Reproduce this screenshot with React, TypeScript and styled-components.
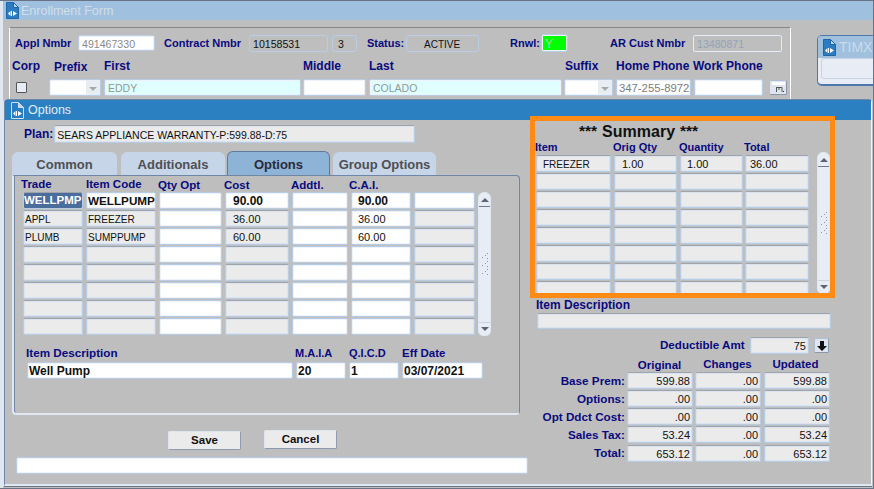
import React from "react";
import styled, { createGlobalStyle } from "styled-components";

const Global = createGlobalStyle`
  html, body { margin: 0; padding: 0; background: #bebebe; }
  body { font-family: "Liberation Sans", Arial, sans-serif; }
`;

const Desktop = styled.div`
  position: relative;
  width: 874px;
  height: 489px;
  overflow: hidden;
  background: #bebebe;
  box-sizing: border-box;
  border-top: 1px solid #6b7486;
  border-right: 1px solid #6b7486;
  border-bottom: 1px solid #6b7486;
`;

const Window = styled.section`
  position: absolute;
  box-sizing: border-box;
`;

const BackWindow = styled(Window)`
  inset: 0 0 0 0;
  border-left: 3px solid #dfe7f1;
`;

const TitleBar = styled.header<{ $active?: boolean }>`
  display: flex;
  align-items: center;
  gap: ${(p) => (p.$active ? 3 : 1)}px;
  height: ${(p) => (p.$active ? 20 : 19)}px;
  padding-left: ${(p) => (p.$active ? 5 : 2)}px;
  background: ${(p) => (p.$active ? "#2b80c2" : "#9fc0de")};
  color: ${(p) => (p.$active ? "#e4edf6" : "#d3dee9")};
  font-size: 12.5px;
  box-sizing: border-box;
`;

const HeaderPanel = styled.div`
  margin: 7px 0 0 6px;
  width: 782px;
  height: 80px;
  box-sizing: border-box;
  border-top: 1px solid #888;
  border-left: 1px solid #fff;
  border-right: 1px solid #fff;
  padding: 6px 0 0 5px;
`;

const FlexRow = styled.div<{ $gap?: number; $top?: number; $left?: number; $bottom?: number }>`
  display: flex;
  align-items: center;
  gap: ${(p) => p.$gap ?? 0}px;
  margin-top: ${(p) => p.$top ?? 0}px;
  margin-left: ${(p) => p.$left ?? 0}px;
  margin-bottom: ${(p) => p.$bottom ?? 0}px;
`;

const Label = styled.span<{ $w?: number; $ml?: number; $right?: boolean; $size?: number; $center?: boolean; $dy?: number }>`
  display: block;
  flex: none;
  font-size: ${(p) => p.$size ?? 12}px;
  line-height: 14px;
  font-weight: 700;
  color: #0a0a80;
  white-space: nowrap;
  ${(p) => (p.$w ? `width: ${p.$w}px;` : "")}
  margin-left: ${(p) => p.$ml ?? 0}px;
  text-align: ${(p) => (p.$right ? "right" : p.$center ? "center" : "left")};
  ${(p) => (p.$dy ? `transform: translateY(${p.$dy}px);` : "")}
`;

const Field = styled.div<{
  $w: number;
  $h?: number;
  $ml?: number;
  $mt?: number;
  $tone?: "white" | "gray" | "cyan" | "green" | "clear" | "halo";
  $bold?: boolean;
  $right?: boolean;
  $color?: string;
  $pad?: number;
  $size?: number;
  $lift?: boolean;
}>`
  flex: none;
  box-sizing: border-box;
  width: ${(p) => p.$w}px;
  height: ${(p) => p.$h ?? 17}px;
  margin-left: ${(p) => p.$ml ?? 0}px;
  margin-top: ${(p) => p.$mt ?? 0}px;
  padding: 0 ${(p) => (p.$right ? 2 : 0)}px 0 ${(p) => p.$pad ?? 3}px;
  border: 1px solid ${(p) => (p.$tone === "halo" ? "#e4ebf4" : "#b8cce4")};
  border-top-color: ${(p) => (p.$tone === "gray" ? "#9fa3aa" : p.$tone === "halo" ? "#e4ebf4" : "#b8cce4")};
  border-radius: 2px;
  box-shadow: inset 0 0 0 1px ${(p) =>
    p.$tone === "clear" || p.$tone === "halo"
      ? "transparent"
      : p.$tone === "gray"
      ? "#dbe3ee"
      : "#eef3f9"};
  background: ${(p) =>
    ({ white: "#fff", gray: "#ebebeb", cyan: "#e0ffff", green: "#00ff00", clear: "#bebebe", halo: "#bebebe" }[
      p.$tone ?? "white"
    ])};
  color: ${(p) => p.$color ?? "#111"};
  font-size: ${(p) => p.$size ?? (p.$bold ? 12 : 11)}px;
  font-weight: ${(p) => (p.$bold ? 700 : 400)};
  line-height: ${(p) => (p.$h ?? 17) - (p.$lift ? 2 : 0)}px;
  text-align: ${(p) => (p.$right ? "right" : "left")};
  white-space: nowrap;
  overflow: hidden;
`;

const SelectField = styled(Field)`
  position: relative;
  &::before {
    content: "";
    position: absolute;
    right: 0;
    top: 0;
    bottom: 0;
    width: 14px;
    background: #e8ecf3;
  }
  &::after {
    content: "";
    position: absolute;
    right: 3px;
    top: 7px;
    border: 4px solid transparent;
    border-top: 4px solid #a9a9a9;
    border-bottom: 0;
  }
`;

const Check = styled.span`
  flex: none;
  display: block;
  box-sizing: border-box;
  width: 11px;
  height: 11px;
  margin-left: 1px;
  background: #e8edf5;
  border: 1px solid #555;
  border-radius: 1px;
`;

const IconButton = styled.span<{ $ml: number; $w: number }>`
  flex: none;
  display: flex;
  align-items: center;
  justify-content: center;
  box-sizing: border-box;
  width: ${(p) => p.$w}px;
  height: 15px;
  margin-left: ${(p) => p.$ml}px;
  background: #dfe5ee;
  border: 1px solid #aebfd4;
  border-bottom-color: #8a97a8;
  border-right-color: #8a97a8;
  border-radius: 2px;
`;

const TimxWindow = styled(Window)`
  top: 34px;
  left: 817px;
  width: 70px;
  height: 51px;
  background: #e8edf5;
  border: 1px solid #4d78ac;
  border-bottom-width: 2px;
  border-radius: 5px;
  overflow: hidden;
`;

const TimxTitle = styled.div`
  display: flex;
  align-items: center;
  gap: 2px;
  font-size: 14px;
  color: #c8dcee;
  height: 22px;
  padding-left: 4px;
  background: #a0c0de;
  white-space: nowrap;
`;

const TimxBody = styled.div`
  height: 19px;
  margin: 0 0 0 3px;
  background: #e8edf5;
  border: 1px solid #c4d3e6;
  border-radius: 3px;
`;

const OptionsWindow = styled(Window)`
  top: 98px;
  left: 4px;
  width: 868px;
  height: 387px;
  background: #bebebe;
  border: 1px solid #6f86a6;
  border-right: 1px solid #f2f5f9;
  border-bottom: 2px solid #dfe7f1;
  border-radius: 4px 4px 0 0;
  box-shadow: 0 1px 0 #6b7486, -1px 0 0 #dfe7f1;
`;

const OptionsBody = styled.div`
  display: flex;
  height: 364px;
  box-sizing: border-box;
`;

const LeftColumn = styled.div`
  flex: none;
  width: 525px;
  padding: 5px 0 0 6px;
  box-sizing: border-box;
`;

const RightColumn = styled.div`
  flex: none;
  width: 340px;
  box-sizing: border-box;
`;

const Tabs = styled.nav`
  display: flex;
  margin: 8px 0 0 1px;
  height: 24px;
  align-items: flex-end;
`;

const Tab = styled.div<{ $w: number; $ml: number; $active?: boolean }>`
  box-sizing: border-box;
  width: ${(p) => p.$w}px;
  height: ${(p) => (p.$active ? 24 : 23)}px;
  margin-left: ${(p) => p.$ml}px;
  background: ${(p) => (p.$active ? "#8db3d6" : "#c6d5e8")};
  border-radius: 6px 6px 0 0;
  border: 1px solid ${(p) => (p.$active ? "#5d7a9c" : "#c6d5e8")};
  border-bottom: 0;
  color: ${(p) => (p.$active ? "#2a2a3a" : "#4f4f55")};
  font-size: 13px;
  font-weight: 700;
  line-height: ${(p) => (p.$active ? 26 : 24)}px;
  text-align: center;
  white-space: nowrap;
`;

const TabPanel = styled.div`
  width: 508px;
  height: 240px;
  margin-left: 1px;
  box-sizing: border-box;
  border: 1px solid #6f86a6;
  border-left: 2px solid #dfe7f1;
  border-bottom: 2px solid #dfe7f1;
  border-radius: 0 4px 4px 4px;
  box-shadow: inset 1px 0 0 #6f86a6;
  padding: 2px 0 0 9px;
`;

const GridWrap = styled.div`
  display: flex;
  gap: 3px;
`;

const GridRows = styled.div`
  display: flex;
  flex-direction: column;
  gap: 1px;
  flex: none;
`;

const GridRow = styled.div<{ $gap: number }>`
  display: flex;
  gap: ${(p) => p.$gap}px;
  height: 17px;
`;

const Scrollbar = styled.div<{ $h: number; $mt: number; $ml?: number }>`
  position: relative;
  flex: none;
  box-sizing: border-box;
  width: 13px;
  height: ${(p) => p.$h}px;
  margin-top: ${(p) => p.$mt}px;
  margin-left: ${(p) => p.$ml ?? 0}px;
  background: #e8edf5;
  border-radius: 6px 6px 5px 5px;
  border: 1px solid #dfe7f1;
`;

const ScrollUp = styled.span`
  position: absolute;
  left: 0;
  right: 0;
  top: 0;
  height: 13px;
  border-bottom: 1px solid #6f7c90;
  display: flex;
  align-items: center;
  justify-content: center;
  &::after {
    content: "";
    border: 4px solid transparent;
    border-bottom: 4px solid #5a6678;
    border-top: 0;
  }
`;

const ScrollDown = styled.span`
  position: absolute;
  left: 0;
  right: 0;
  bottom: 0;
  height: 12px;
  border-top: 1px solid #c9d3e0;
  display: flex;
  align-items: center;
  justify-content: center;
  &::after {
    content: "";
    border: 4px solid transparent;
    border-top: 4px solid #5a6678;
    border-bottom: 0;
  }
`;

const Grip = styled.svg`
  position: absolute;
  left: 2px;
  top: 50%;
  margin-top: -13px;
`;

const ButtonRow = styled.div`
  display: flex;
  align-items: flex-start;
  margin: 15px 0 0 157px;
`;

const Button = styled.div<{ $ml?: number; $mt?: number }>`
  box-sizing: border-box;
  width: 73px;
  height: 19px;
  margin-left: ${(p) => p.$ml ?? 0}px;
  margin-top: ${(p) => p.$mt ?? 0}px;
  background: #ebebeb;
  border: 1px solid #8c9bb0;
  border-top-color: #dfe5ee;
  border-left-color: #dfe5ee;
  border-radius: 2px;
  font-size: 11.5px;
  font-weight: 700;
  line-height: 17px;
  text-align: center;
  color: #111;
`;

const SummaryBox = styled.div`
  box-sizing: border-box;
  width: 305px;
  height: 182px;
  margin-top: -4px;
  border: 5px solid #ff8a14;
  overflow: hidden;
`;

const SummaryTitle = styled.div`
  display: flex;
  align-items: flex-start;
  gap: 5px;
  height: 17px;
  margin-left: 44px;
  margin-top: 2px;
  font-weight: 700;
  color: #111;
`;

const SummaryWord = styled.span`
  font-size: 16px;
  line-height: 18px;
`;

const Stars = styled.span`
  font-size: 15.500px;
  line-height: 15px;
  font-weight: 700;
`;

const SummaryWrap = styled.div`
  display: flex;
`;

const Totals = styled.div`
  display: grid;
  grid-template-columns: 95px 66px 66px 67px;
  column-gap: 2px;
  row-gap: 1px;
  align-items: center;
`;

const LogoSvg = styled.svg`
  flex: none;
`;

const Logo = ({ stroke = "#1f66a6" }: { stroke?: string }) => (
  <LogoSvg width="15" height="17" viewBox="0 0 15 17">
    <path d="M1.5 .5h7l5 5v11h-12z" fill="#2b7cc0" stroke={stroke} />
    <path d="M8.5 .5v5h5z" fill="#bcd4ea" stroke={stroke} />
    <path d="M3 11.5l2.500-2.500v5zM6 9h1v5H6zM8 9l4 2.500L8 14z" fill="#fff" />
  </LogoSvg>
);

const gridCols = [60, 70, 63, 64, 56, 60, 61];

type CellSpec = {
  text?: string;
  tone: "white" | "gray";
  bold?: boolean;
  pad?: number;
  size?: number;
  selected?: boolean;
  lift?: boolean;
};

const tradeRows: CellSpec[][] = [
  [
    { text: "WELLPMP", tone: "gray", bold: true, selected: true, pad: 0, lift: true },
    { text: "WELLPUMP", tone: "white", bold: true, pad: 1, size: 11.7, lift: true },
    { tone: "white" },
    { text: "90.00", tone: "white", bold: true, pad: 7 },
    { tone: "white" },
    { text: "90.00", tone: "white", bold: true, pad: 6 },
    { tone: "white" },
  ],
  [
    { text: "APPL", tone: "gray", size: 10, pad: 1 },
    { text: "FREEZER", tone: "gray", size: 10, pad: 1 },
    { tone: "white" },
    { text: "36.00", tone: "gray", pad: 7 },
    { tone: "white" },
    { text: "36.00", tone: "white", pad: 6 },
    { tone: "gray" },
  ],
  [
    { text: "PLUMB", tone: "gray", size: 10, pad: 1 },
    { text: "SUMPPUMP", tone: "gray", size: 10, pad: 1 },
    { tone: "white" },
    { text: "60.00", tone: "gray", pad: 7 },
    { tone: "white" },
    { text: "60.00", tone: "white", pad: 6 },
    { tone: "gray" },
  ],
  ...Array.from({ length: 5 }, (): CellSpec[] => [
    { tone: "gray" },
    { tone: "gray" },
    { tone: "white" },
    { tone: "gray" },
    { tone: "white" },
    { tone: "white" },
    { tone: "gray" },
  ]),
];

const Selected = styled.span`
  display: block;
  background: #4a6d9c;
  color: #fff;
  font-size: 11.5px;
  width: 58px;
  overflow: hidden;
`;

const summaryCols = [75, 63, 63, 64];
const summaryMargins = [1, 1, 1, 0];
const summaryPads = [6, 7, 6, 4];
const summaryFirst = ["FREEZER", "1.00", "1.00", "36.00"];

const totalsData: [string, string, string, string][] = [
  ["Base Prem:", "599.88", ".00", "599.88"],
  ["Options:", ".00", ".00", ".00"],
  ["Opt Ddct Cost:", ".00", ".00", ".00"],
  ["Sales Tax:", "53.24", ".00", "53.24"],
  ["Total:", "653.12", ".00", "653.12"],
];

const GripMarks = () => (
  <Grip width="8" height="26" viewBox="0 0 8 26">
    {[2, 10, 18].map((y) => (
      <g key={y} fill="#8a96a8">
        <rect x="6" y={y} width="1" height="1" />
        <rect x="4" y={y + 2} width="1" height="1" />
        <rect x="1" y={y + 4} width="1" height="1" />
        <rect x="6" y={y + 5} width="1" height="1" />
      </g>
    ))}
  </Grip>
);

export default function App() {
  return (
    <>
      <Global />
      <Desktop>
        <BackWindow>
          <TitleBar>
            <Logo />
            <span>Enrollment Form</span>
          </TitleBar>
          <HeaderPanel>
            <FlexRow>
              <Label $w={63} $size={11}>Appl Nmbr</Label>
              <Field $w={77} $h={16} $color="#8a8a8a" $size={10.6}>491467330</Field>
              <Label $w={85} $ml={9} $size={11}>Contract Nmbr</Label>
              <Field $w={79} $tone="clear" $size={10.6}>10158531</Field>
              <Field $w={25} $ml={4} $tone="clear" $pad={5} $size={10.6}>3</Field>
              <Label $w={39} $ml={10} $size={11}>Status:</Label>
              <Field $w={73} $tone="clear" $pad={17} $size={10}>ACTIVE</Field>
              <Label $w={31} $ml={31} $size={11}>Rnwl:</Label>
              <Field $w={27} $h={18} $tone="green" $color="#9fe8a0" $size={12}>Y</Field>
              <Label $w={83} $ml={42} $size={11}>AR Cust Nmbr</Label>
              <Field $w={89} $tone="halo" $color="#93a3b8" $size={10.6}>13480871</Field>
            </FlexRow>
            <FlexRow $top={7} $left={-3}>
              <Label $w={42}>Corp</Label>
              <Label $w={50} $dy={1}>Prefix</Label>
              <Label $w={199}>First</Label>
              <Label $w={66}>Middle</Label>
              <Label $w={196}>Last</Label>
              <Label $w={51}>Suffix</Label>
              <Label $w={77}>Home Phone</Label>
              <Label>Work Phone</Label>
            </FlexRow>
            <FlexRow $top={6}>
              <Check />
              <SelectField $w={52} $ml={22} />
              <Field $w={197} $ml={3} $tone="cyan" $color="#8f9a9a" $size={10.5}>EDDY</Field>
              <Field $w={63} $ml={2} />
              <Field $w={193} $ml={3} $tone="cyan" $color="#8f9a9a" $size={10.5}>COLADO</Field>
              <SelectField $w={49} $ml={2} />
              <Field $w={75} $ml={3} $color="#7d7d7d" $size={11.3} $pad={2}>347-255-8972</Field>
              <Field $w={69} $ml={3} />
              <IconButton $ml={6} $w={18}>
                <svg width="13" height="11" viewBox="0 0 13 11">
                  <rect x="0" y="0" width="13" height="3" fill="#fff" />
                  <path d="M4 5.500h6v4.500M4.500 5v5M7 5v3" fill="none" stroke="#555" />
                  <rect x="11" y="9" width="1" height="1" fill="#333" />
                </svg>
              </IconButton>
            </FlexRow>
          </HeaderPanel>
        </BackWindow>

        <TimxWindow>
          <TimxTitle>
            <Logo />
            <span>TIMX N</span>
          </TimxTitle>
          <TimxBody />
        </TimxWindow>

        <OptionsWindow>
          <TitleBar $active>
            <Logo stroke="#cfe0f0" />
            <span>Options</span>
          </TitleBar>
          <OptionsBody>
            <LeftColumn>
              <FlexRow>
                <Label $ml={13}>Plan:</Label>
                <Field $w={361} $ml={1} $h={18} $tone="gray" $pad={2} $size={10.5}>SEARS APPLIANCE WARRANTY-P:599.88-D:75</Field>
              </FlexRow>
              <Tabs>
                <Tab $w={105} $ml={0}>Common</Tab>
                <Tab $w={104} $ml={4}>Additionals</Tab>
                <Tab $w={103} $ml={2} $active>Options</Tab>
                <Tab $w={103} $ml={3}>Group Options</Tab>
              </Tabs>
              <TabPanel>
                <FlexRow $left={-2}>
                  <Label $w={65} $size={11.5} $dy={-1}>Trade</Label>
                  <Label $w={72} $size={11.5} $dy={-1}>Item Code</Label>
                  <Label $w={66} $size={11.5}>Qty Opt</Label>
                  <Label $w={67} $size={11.5}>Cost</Label>
                  <Label $w={58} $size={11.5}>Addtl.</Label>
                  <Label $size={11.5}>C.A.I.</Label>
                </FlexRow>
                <GridWrap>
                  <GridRows>
                    {tradeRows.map((row, r) => (
                      <GridRow key={r} $gap={3}>
                        {row.map((c, i) => (
                          <Field key={i} $w={gridCols[i]} $tone={c.tone} $bold={c.bold} $pad={c.pad} $size={c.size} $lift={c.lift}>
                            {c.selected ? <Selected>{c.text}</Selected> : c.text}
                          </Field>
                        ))}
                      </GridRow>
                    ))}
                  </GridRows>
                  <Scrollbar $h={144} $mt={0}>
                    <ScrollUp />
                    <GripMarks />
                    <ScrollDown />
                  </Scrollbar>
                </GridWrap>
                <FlexRow $top={10} $left={3}>
                  <Label $w={269} $size={11.7}>Item Description</Label>
                  <Label $w={54} $size={11}>M.A.I.A</Label>
                  <Label $w={53} $size={11}>Q.I.C.D</Label>
                  <Label $size={11.5}>Eff Date</Label>
                </FlexRow>
                <FlexRow $top={2} $left={4} $gap={3}>
                  <Field $w={266} $bold $pad={1}>Well Pump</Field>
                  <Field $w={50} $bold $pad={1}>20</Field>
                  <Field $w={50} $bold $pad={1}>1</Field>
                  <Field $w={81} $bold $pad={1}>03/07/2021</Field>
                </FlexRow>
              </TabPanel>
              <ButtonRow>
                <Button $mt={1}>Save</Button>
                <Button $ml={23}>Cancel</Button>
              </ButtonRow>
              <Field $w={512} $ml={5} $mt={7} />
            </LeftColumn>
            <RightColumn>
              <SummaryBox>
                <SummaryTitle>
                  <Stars>***</Stars>
                  <SummaryWord>Summary</SummaryWord>
                  <Stars>***</Stars>
                </SummaryTitle>
                <FlexRow $bottom={1}>
                  <Label $w={78} $size={11}>Item</Label>
                  <Label $w={66} $size={11}>Orig Qty</Label>
                  <Label $w={65} $size={11}>Quantity</Label>
                  <Label $size={11}>Total</Label>
                </FlexRow>
                <SummaryWrap>
                  <GridRows>
                    {Array.from({ length: 8 }, (_, r) => (
                      <GridRow key={r} $gap={2}>
                        {summaryCols.map((w, i) => (
                          <Field key={i} $w={w} $ml={summaryMargins[i]} $tone="gray" $pad={summaryPads[i]} $size={i === 0 ? 10 : 11}>
                            {r === 0 ? summaryFirst[i] : ""}
                          </Field>
                        ))}
                      </GridRow>
                    ))}
                  </GridRows>
                  <Scrollbar $h={142} $mt={-3} $ml={8}>
                    <ScrollUp />
                    <GripMarks />
                    <ScrollDown />
                  </Scrollbar>
                </SummaryWrap>
              </SummaryBox>
              <Label $ml={6}>Item Description</Label>
              <Field $w={294} $h={16} $ml={7} $mt={1} $tone="gray" />
              <FlexRow $top={8} $left={130}>
                <Label $w={90} $dy={-1} $size={11.6}>Deductible Amt</Label>
                <Field $w={59} $tone="gray" $right>75</Field>
                <IconButton $ml={5} $w={15}>
                  <svg width="10" height="10" viewBox="0 0 10 10">
                    <path d="M3 0h4v5h3L5 10 0 5h3z" fill="#111" />
                  </svg>
                </IconButton>
              </FlexRow>
              <FlexRow $top={3} $left={95} $bottom={1}>
                <Label $w={69} $center $dy={1} $size={11.5}>Original</Label>
                <Label $w={67} $center $size={11.5}>Changes</Label>
                <Label $w={69} $center $size={11.5}>Updated</Label>
              </FlexRow>
              <Totals>
                {totalsData.map(([label, a, b, c], i) => (
                  <React.Fragment key={label}>
                    <Label $right $size={11.7}>{label}</Label>
                    <Field $w={66} $tone="gray" $right $mt={i === 4 ? 1 : 0}>{a}</Field>
                    <Field $w={66} $tone="gray" $right $mt={i === 4 ? 1 : 0}>{b}</Field>
                    <Field $w={66} $ml={1} $tone="gray" $right $mt={i === 4 ? 1 : 0}>{c}</Field>
                  </React.Fragment>
                ))}
              </Totals>
            </RightColumn>
          </OptionsBody>
        </OptionsWindow>
      </Desktop>
    </>
  );
}
